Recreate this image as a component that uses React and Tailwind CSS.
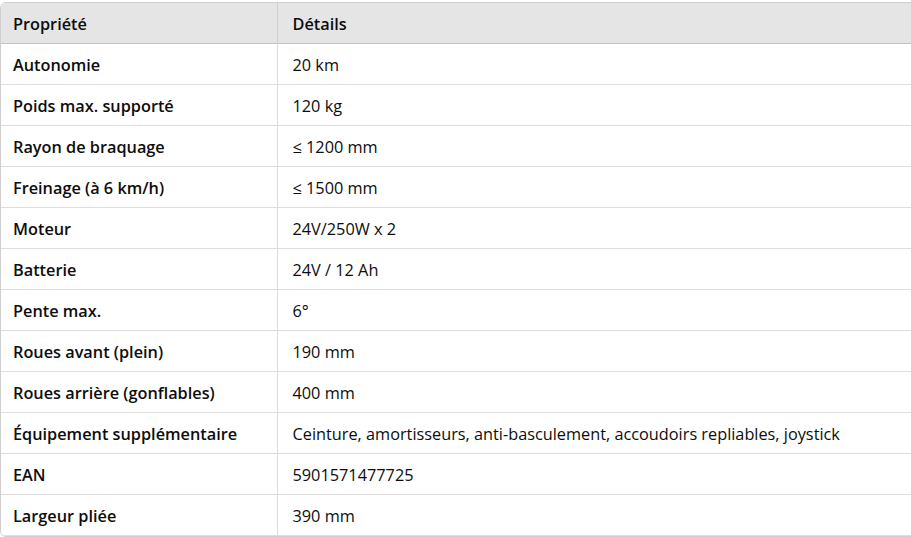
const rows = [
  ['Autonomie', '20 km'],
  ['Poids max. supporté', '120 kg'],
  ['Rayon de braquage', '≤ 1200 mm'],
  ['Freinage (à 6 km/h)', '≤ 1500 mm'],
  ['Moteur', '24V/250W x 2'],
  ['Batterie', '24V / 12 Ah'],
  ['Pente max.', '6°'],
  ['Roues avant (plein)', '190 mm'],
  ['Roues arrière (gonflables)', '400 mm'],
  ['Équipement supplémentaire', 'Ceinture, amortisseurs, anti-basculement, accoudoirs repliables, joystick'],
  ['EAN', '5901571477725'],
  ['Largeur pliée', '390 mm'],
];

export default function App() {
  return (
    <div className="w-[911px] h-[537px] overflow-hidden bg-white pt-[2px]"
      style={{ fontFamily: '"Open Sans", "Noto Sans", sans-serif' }}>
      <div className="w-[960px] border border-[#cfcfcf] rounded-[6px] overflow-hidden">
        <table className="w-full border-collapse text-[16.3px] text-[#0d0d0d]">
          <thead>
            <tr className="bg-[#e5e5e5] border-b border-[#c3c3c3]">
              <th className="w-[276px] h-[40px] pl-[12px] pt-[2px] text-left font-semibold border-r border-[#cfcfcf]">Propriété</th>
              <th className="h-[40px] pl-[15px] pt-[2px] text-left font-semibold">Détails</th>
            </tr>
          </thead>
          <tbody>
            {rows.map(([k, v]) => (
              <tr key={k} className="border-b border-[#dedede]">
                <td className="h-[41px] pl-[12px] pt-[3px] font-semibold border-r border-[#dedede]">{k}</td>
                <td className="h-[41px] pl-[15px] pt-[3px]">{v}</td>
              </tr>
            ))}
          </tbody>
        </table>
      </div>
    </div>
  );
}
